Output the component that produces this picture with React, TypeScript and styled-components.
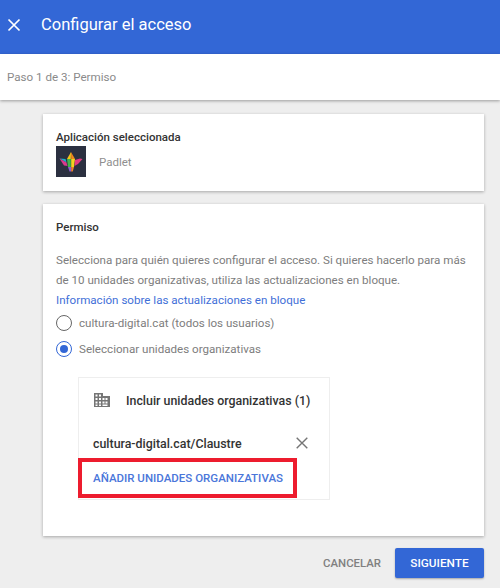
import React from "react";
import styled, { createGlobalStyle } from "styled-components";

const Global = createGlobalStyle`
  html, body { margin: 0; padding: 0; background: #eeeeee; }
  body { font-family: Roboto, "Liberation Sans", Arial, sans-serif; }
  * { box-sizing: border-box; }
`;

const Page = styled.div`
  width: 500px;
  height: 588px;
  overflow: hidden;
  background: #eeeeee;
  display: flex;
  flex-direction: column;
`;

const Header = styled.header`
  height: 54px;
  background: #3367d6;
  display: flex;
  align-items: center;
  padding: 0 0 5px 7px;
  gap: 20px;
  color: #fff;
`;

const CloseButton = styled.span`
  display: flex;
  width: 14px;
  height: 14px;
`;

const Title = styled.h1`
  margin: 0;
  font-size: 16.500px;
  font-weight: 400;
  line-height: 24px;
`;

const StepBar = styled.div`
  height: 46px;
  background: #fff;
  box-shadow: 0 1px 3px rgba(0, 0, 0, 0.35);
  display: flex;
  align-items: center;
  padding: 0 0 0 7px;
  font-size: 11.600px;
  color: #8a8a8a;
`;

const Content = styled.main`
  display: flex;
  flex-direction: column;
  gap: 13px;
  padding: 14px 16px 0 43px;
`;

const Card = styled.section<{ $pad: string; $height: number }>`
  background: #fff;
  box-shadow: 0 1px 3px rgba(0, 0, 0, 0.3);
  padding: ${(p) => p.$pad};
  height: ${(p) => p.$height}px;
`;

const CardTitle = styled.h2`
  margin: 0;
  font-size: 11.500px;
  font-weight: 500;
  line-height: 16px;
  color: #333;
`;

const AppRow = styled.div`
  display: flex;
  align-items: center;
  gap: 13px;
  margin-top: 1px;
`;

const AppLogo = styled.span`
  display: flex;
  width: 30px;
  height: 31px;
  background: #2b3040;
`;

const AppName = styled.span`
  font-size: 11.500px;
  color: #8f8f8f;
`;

const Description = styled.p`
  margin: 15px 0 0;
  font-size: 11.600px;
  line-height: 20px;
  color: #7d7d7d;
  white-space: nowrap;
`;

const InfoLink = styled.a`
  display: block;
  font-size: 11.600px;
  line-height: 20px;
  color: #3f6fd8;
`;

const RadioRow = styled.label`
  display: flex;
  align-items: center;
  gap: 7px;
  height: 26px;
  font-size: 11.600px;
  color: #7d7d7d;
`;

const Radio = styled.span<{ $checked?: boolean }>`
  width: 16px;
  height: 16px;
  border-radius: 50%;
  border: 1.5px solid ${(p) => (p.$checked ? "#3367d6" : "#666")};
  display: flex;
  align-items: center;
  justify-content: center;
  &::after {
    content: "";
    display: ${(p) => (p.$checked ? "block" : "none")};
    width: 8px;
    height: 8px;
    border-radius: 50%;
    background: #3367d6;
  }
`;

const OrgCard = styled.div`
  position: relative;
  width: 252px;
  height: 123px;
  margin: 15px 0 0 22px;
  border: 1px solid #eeeeee;
  padding: 0 14px;
`;

const OrgHeader = styled.div`
  display: flex;
  align-items: center;
  gap: 15px;
  height: 44px;
  font-size: 12.400px;
  font-weight: 500;
  color: #333;
`;

const OrgRow = styled.div`
  display: flex;
  align-items: center;
  justify-content: space-between;
  height: 20px;
  margin-top: 11px;
  font-size: 12.400px;
  font-weight: 500;
  color: #333;
  padding-right: 7px;
`;

const AddLink = styled.a`
  display: block;
  margin-top: 17px;
  font-size: 11.500px;
  font-weight: 500;
  line-height: 16px;
  color: #4a76da;
`;

const Highlight = styled.div`
  position: absolute;
  left: -1px;
  top: 80px;
  width: 219px;
  height: 40px;
  border: 4px solid #ed1c2e;
`;

const Footer = styled.footer`
  display: flex;
  justify-content: flex-end;
  align-items: center;
  gap: 14px;
  margin-top: 12px;
  padding-right: 16px;
`;

const CancelButton = styled.button`
  border: 0;
  background: none;
  padding: 0;
  font: 500 11.400px Roboto, sans-serif;
  color: #808080;
`;

const NextButton = styled.button`
  width: 89px;
  height: 30px;
  border: 0;
  border-radius: 2px;
  background: #3367d6;
  box-shadow: 0 1px 2px rgba(0, 0, 0, 0.3);
  color: #fff;
  font: 500 11.800px Roboto, sans-serif;
`;

export default function App() {
  return (
    <Page>
      <Global />
      <Header>
        <CloseButton>
          <svg width="14" height="14" viewBox="0 0 14 14">
            <path d="M1.500 1.500 12.500 12.500M12.500 1.500 1.500 12.500" stroke="#fff" strokeWidth="1.700" />
          </svg>
        </CloseButton>
        <Title>Configurar el acceso</Title>
      </Header>
      <StepBar>Paso 1 de 3: Permiso</StepBar>
      <Content>
        <Card $pad="15px 13px 0" $height={77}>
          <CardTitle>Aplicación seleccionada</CardTitle>
          <AppRow>
            <AppLogo>
              <svg width="30" height="31" viewBox="0 0 30 31">
                <path d="M3.500 12.500 9.500 13 10.500 16.500Z" fill="#18b4c8" />
                <path d="M3.500 12.500 10.500 16.500 11.500 20 8 19.500Z" fill="#d9398c" />
                <path d="M15 6 11 13 14.800 13Z" fill="#f5c518" />
                <path d="M15 6 19 13 15.200 13Z" fill="#f08a1d" />
                <path d="M11 13 14.800 13 14.800 21 12 21Z" fill="#3fb44a" />
                <path d="M15.200 13 19 13 18 21 15.200 21Z" fill="#f4d21f" />
                <path d="M12 21 15.200 21 15.200 25.500 13.500 25.500Z" fill="#8e5bd0" />
                <path d="M15.200 21 18 21 16.800 25.500 15.200 25.500Z" fill="#f0802a" />
                <path d="M19 14 24 12.500 26.500 13 22 18 18.500 20Z" fill="#e5397f" />
              </svg>
            </AppLogo>
            <AppName>Padlet</AppName>
          </AppRow>
        </Card>
        <Card $pad="15px 13px 0" $height={332}>
          <CardTitle>Permiso</CardTitle>
          <Description>
            Selecciona para quién quieres configurar el acceso. Si quieres hacerlo para más
            <br />
            de 10 unidades organizativas, utiliza las actualizaciones en bloque.
          </Description>
          <InfoLink>Información sobre las actualizaciones en bloque</InfoLink>
          <div>
            <RadioRow>
              <Radio />
              cultura-digital.cat (todos los usuarios)
            </RadioRow>
            <RadioRow>
              <Radio $checked />
              Seleccionar unidades organizativas
            </RadioRow>
          </div>
          <OrgCard>
            <OrgHeader>
              <svg width="18" height="16" viewBox="0 0 18 16">
                <path fill="#757575" d="M1 1h9v3h7v11H1Zm1.500 1.500v2h2v-2Zm3.500 0v2h2v-2ZM2.500 6v2h2V6ZM6 6v2h2V6Zm3.500 0v2h2V6Zm3 0v2h2V6ZM2.500 9.500v2h2v-2Zm3.500 0v2h2v-2Zm3.500 0v2h2v-2Zm3 0v2h2v-2ZM2.500 12.500v1.500h2v-1.500Zm3.500 0v1.500h2v-1.500Zm3.500 0v1.500h5v-1.500Z" fillRule="evenodd" />
              </svg>
              Incluir unidades organizativas (1)
            </OrgHeader>
            <OrgRow>
              cultura-digital.cat/Claustre
              <svg width="12" height="12" viewBox="0 0 12 12">
                <path d="M.700.700 11.300 11.300M11.300.700.700 11.300" stroke="#757575" strokeWidth="1.400" />
              </svg>
            </OrgRow>
            <AddLink>AÑADIR UNIDADES ORGANIZATIVAS</AddLink>
            <Highlight />
          </OrgCard>
        </Card>
      </Content>
      <Footer>
        <CancelButton>CANCELAR</CancelButton>
        <NextButton>SIGUIENTE</NextButton>
      </Footer>
    </Page>
  );
}
